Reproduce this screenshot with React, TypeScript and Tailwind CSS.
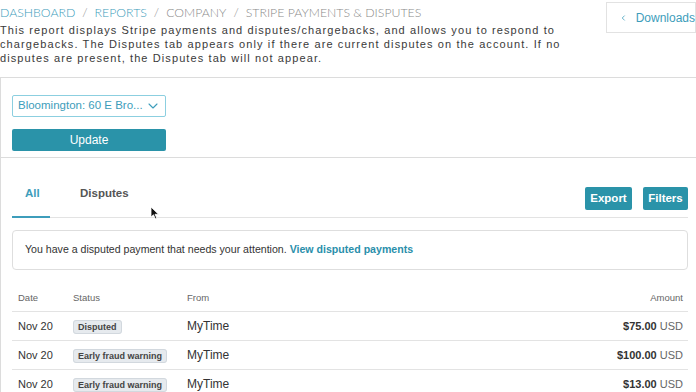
import { ChevronLeft, ChevronDown } from "lucide-react";

const rows = [
  { date: "Nov 20", status: "Disputed", from: "MyTime", amount: "$75.00" },
  { date: "Nov 20", status: "Early fraud warning", from: "MyTime", amount: "$100.00" },
  { date: "Nov 20", status: "Early fraud warning", from: "MyTime", amount: "$13.00" },
];

export default function App() {
  return (
    <div
      className="relative h-[392px] w-[696px] overflow-hidden bg-white flex flex-col text-[#333]"
      style={{ fontFamily: '"Liberation Sans", Arial, sans-serif' }}
    >
      {/* header */}
      <div className="flex h-[77px] shrink-0">
        <div className="flex-1 pt-[4px]">
          <div
            className="whitespace-nowrap text-[12.3px] leading-[18px] text-[#8a8a8a] font-light"
            style={{ fontFamily: "Lato, sans-serif" }}
          >
            <span className="text-[#3d9dbb]">DASHBOARD</span>
            <span className="mx-[7px]">/</span>
            <span className="text-[#3d9dbb]">REPORTS</span>
            <span className="mx-[7px]">/</span>
            <span>COMPANY</span>
            <span className="mx-[7px]">/</span>
            <span>STRIPE PAYMENTS &amp; DISPUTES</span>
          </div>
          <p className="mt-[1px] whitespace-nowrap text-[11px] leading-[14px] tracking-[1.1px] text-[#3a3a3a]">
            This report displays Stripe payments and disputes/chargebacks, and allows you to respond to
            <br />
            chargebacks. The Disputes tab appears only if there are current disputes on the account. If no
            <br />
            disputes are present, the Disputes tab will not appear.
          </p>
        </div>
        <div className="pt-[2px]">
          <button className="flex h-[31px] w-[90px] items-center gap-[8px] whitespace-nowrap border border-[#e2e2e2] pl-[12px] text-[12px] text-[#3d9dbb]">
            <ChevronLeft size={12} strokeWidth={2.2} />
            Downloads
          </button>
        </div>
      </div>

      {/* body */}
      <div className="flex-1 border-t border-l border-[#dcdcdc] flex flex-col">
        <div className="border-b border-[#dcdcdc] px-[11px] pt-[17px] pb-[6px]">
          <div className="flex h-[22px] w-[154px] items-center justify-between rounded-[2px] border border-[#8ccfe0] pl-[5px] pr-[4px] text-[11.5px] text-[#3d9dbb]">
            <span className="whitespace-nowrap">Bloomington: 60 E Bro...</span>
            <ChevronDown size={16} strokeWidth={1.6} className="text-[#3d9dbb]" />
          </div>
          <button className="mt-[12px] h-[22px] w-[154px] rounded-[2px] bg-[#2a93a9] text-[12px] text-white">
            Update
          </button>
        </div>

        <div className="ml-[11px] mr-[8px] mt-[27px] flex items-end justify-between border-b border-[#e3e3e3]">
          <div className="flex text-[11.5px] font-bold">
            <div className="w-[38px] border-b-2 border-[#3d9dbb] pb-[14px] pl-[13px] -mb-px text-[#3d9dbb]">All</div>
            <div className="ml-[30px] pb-[14px] text-[#555]">Disputes</div>
          </div>
          <div className="mb-[7px] flex gap-[11px] text-[11.5px] font-bold text-white">
            <button className="h-[23px] w-[47px] rounded-[2px] bg-[#2a93a9]">Export</button>
            <button className="h-[23px] w-[45px] rounded-[2px] bg-[#2a93a9]">Filters</button>
          </div>
        </div>

        <div className="ml-[11px] mr-[8px] mt-[12px] flex h-[40px] items-center rounded-[4px] border border-[#dedede] pl-[12px] text-[10.6px] text-[#333]">
          You have a disputed payment that needs your attention.&nbsp;
          <span className="font-bold text-[#2a8fab]">View disputed payments</span>
        </div>

        <div className="ml-[11px] mr-[8px] mt-[20px] text-[11px]">
          <div className="flex h-[22px] items-start pt-[1px] border-b border-[#e3e3e3] text-[9.5px] text-[#666]">
            <div className="w-[55px] pl-[6px]">Date</div>
            <div className="w-[114px] pl-[6px]">Status</div>
            <div className="flex-1 pl-[6px]">From</div>
            <div className="pr-[5px]">Amount</div>
          </div>
          {rows.map((r, i) => (
            <div key={i} className="flex h-[29px] items-center border-b border-[#e3e3e3]">
              <div className="w-[55px] pl-[6px] text-[11px]">{r.date}</div>
              <div className="w-[114px] pl-[6px]">
                <span className="rounded-[3px] border border-[#d2d8de] bg-[#e6eaee] px-[4px] py-[1px] text-[9px] font-bold text-[#444]">
                  {r.status}
                </span>
              </div>
              <div className="flex-1 pl-[6px] text-[12px]">{r.from}</div>
              <div className="pr-[5px] text-[11px]">
                <span className="font-bold">{r.amount}</span>
                <span className="text-[#666]"> USD</span>
              </div>
            </div>
          ))}
        </div>
      </div>

      <div className="h-[2px] shrink-0 bg-[#555]" />

      {/* mouse cursor */}
      <svg className="absolute left-[150px] top-[206px]" width="10" height="14" viewBox="0 0 10 14">
        <path d="M1 1 L1 11 L3.5 8.8 L5.3 12.8 L6.8 12.1 L5 8.3 L8.5 8.3 Z" fill="#111" stroke="#fff" strokeWidth="0.8" />
      </svg>
    </div>
  );
}
